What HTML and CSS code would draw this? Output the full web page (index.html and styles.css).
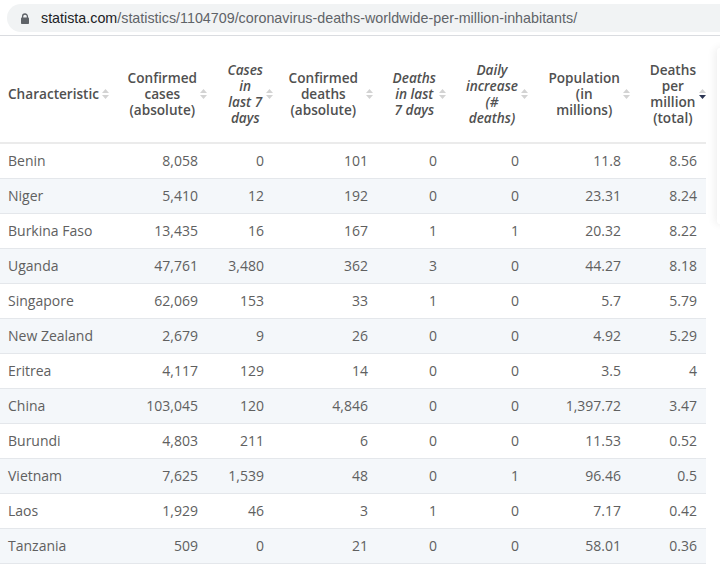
FILE: index.html
```html
<!DOCTYPE html>
<html lang="en">
<head>
<meta charset="utf-8">
<title>Coronavirus deaths per million inhabitants</title>
<link rel="stylesheet" href="styles.css">
</head>
<body>
<header class="topbar">
  <div class="omnibox">
    <svg class="lock" width="8" height="11" viewBox="0 0 8 11"><path d="M1.6 5V3.4a2.4 2.4 0 0 1 4.8 0V5" fill="none" stroke="#5f6368" stroke-width="1.3"/><rect x="0" y="4.6" width="8" height="6.4" rx="0.8" fill="#5f6368"/></svg>
    <span class="host">statista.com</span><span class="path">/statistics/1104709/coronavirus-deaths-worldwide-per-million-inhabitants/</span>
  </div>
</header>
<main class="content">
  <table class="data">
    <colgroup>
      <col class="w1"><col class="w2"><col class="w3"><col class="w4"><col class="w5"><col class="w6"><col class="w7"><col class="w8">
    </colgroup>
    <thead>
      <tr>
        <th class="first"><div class="hd start"><span class="lbl">Characteristic</span><svg class="sort" width="7" height="12" viewBox="0 0 7 12"><path d="M0 5L3.5 1L7 5Z" fill="#d3d3d3"/><path d="M0 7H7L3.5 11Z" fill="#d3d3d3"/></svg></div></th>
        <th><div class="hd"><span class="lbl">Confirmed<br>cases<br>(absolute)</span><svg class="sort" width="7" height="12" viewBox="0 0 7 12"><path d="M0 5L3.5 1L7 5Z" fill="#d3d3d3"/><path d="M0 7H7L3.5 11Z" fill="#d3d3d3"/></svg></div></th>
        <th><div class="hd"><span class="lbl it">Cases<br>in<br>last 7<br>days</span><svg class="sort" width="7" height="12" viewBox="0 0 7 12"><path d="M0 5L3.5 1L7 5Z" fill="#d3d3d3"/><path d="M0 7H7L3.5 11Z" fill="#d3d3d3"/></svg></div></th>
        <th><div class="hd wide"><span class="lbl">Confirmed<br>deaths<br>(absolute)</span><svg class="sort" width="7" height="12" viewBox="0 0 7 12"><path d="M0 5L3.5 1L7 5Z" fill="#d3d3d3"/><path d="M0 7H7L3.5 11Z" fill="#d3d3d3"/></svg></div></th>
        <th><div class="hd"><span class="lbl it">Deaths<br>in last<br>7 days</span><svg class="sort" width="7" height="12" viewBox="0 0 7 12"><path d="M0 5L3.5 1L7 5Z" fill="#d3d3d3"/><path d="M0 7H7L3.5 11Z" fill="#d3d3d3"/></svg></div></th>
        <th><div class="hd"><span class="lbl it">Daily<br>increase<br>(#<br>deaths)</span><svg class="sort" width="7" height="12" viewBox="0 0 7 12"><path d="M0 5L3.5 1L7 5Z" fill="#d3d3d3"/><path d="M0 7H7L3.5 11Z" fill="#d3d3d3"/></svg></div></th>
        <th><div class="hd"><span class="lbl">Population<br>(in<br>millions)</span><svg class="sort" width="7" height="12" viewBox="0 0 7 12"><path d="M0 5L3.5 1L7 5Z" fill="#d3d3d3"/><path d="M0 7H7L3.5 11Z" fill="#d3d3d3"/></svg></div></th>
        <th><div class="hd"><span class="lbl">Deaths<br>per<br>million<br>(total)</span><svg class="sort" width="7" height="12" viewBox="0 0 7 12"><path d="M0 5L3.5 1L7 5Z" fill="#d3d3d3"/><path d="M0 7H7L3.5 11Z" fill="#2c3553"/></svg></div></th>
      </tr>
    </thead>
    <tbody>
      <tr><td>Benin</td><td>8,058</td><td>0</td><td>101</td><td>0</td><td>0</td><td>11.8</td><td>8.56</td></tr>
      <tr><td>Niger</td><td>5,410</td><td>12</td><td>192</td><td>0</td><td>0</td><td>23.31</td><td>8.24</td></tr>
      <tr><td>Burkina Faso</td><td>13,435</td><td>16</td><td>167</td><td>1</td><td>1</td><td>20.32</td><td>8.22</td></tr>
      <tr><td>Uganda</td><td>47,761</td><td>3,480</td><td>362</td><td>3</td><td>0</td><td>44.27</td><td>8.18</td></tr>
      <tr><td>Singapore</td><td>62,069</td><td>153</td><td>33</td><td>1</td><td>0</td><td>5.7</td><td>5.79</td></tr>
      <tr><td>New Zealand</td><td>2,679</td><td>9</td><td>26</td><td>0</td><td>0</td><td>4.92</td><td>5.29</td></tr>
      <tr><td>Eritrea</td><td>4,117</td><td>129</td><td>14</td><td>0</td><td>0</td><td>3.5</td><td>4</td></tr>
      <tr><td>China</td><td>103,045</td><td>120</td><td>4,846</td><td>0</td><td>0</td><td>1,397.72</td><td>3.47</td></tr>
      <tr><td>Burundi</td><td>4,803</td><td>211</td><td>6</td><td>0</td><td>0</td><td>11.53</td><td>0.52</td></tr>
      <tr><td>Vietnam</td><td>7,625</td><td>1,539</td><td>48</td><td>0</td><td>1</td><td>96.46</td><td>0.5</td></tr>
      <tr><td>Laos</td><td>1,929</td><td>46</td><td>3</td><td>1</td><td>0</td><td>7.17</td><td>0.42</td></tr>
      <tr><td>Tanzania</td><td>509</td><td>0</td><td>21</td><td>0</td><td>0</td><td>58.01</td><td>0.36</td></tr>
    </tbody>
  </table>
  <div class="sidecard"></div>
</main>
</body>
</html>
```

FILE: styles.css
```css
html, body {
  margin: 0;
  padding: 0;
  background: #fff;
}
body {
  width: 720px;
  height: 575px;
  overflow: hidden;
  font-family: "Open Sans", "Noto Sans", sans-serif;
}
.topbar {
  height: 36px;
  border-bottom: 1px solid #dadce0;
  padding: 4px 0 0 7px;
  box-sizing: border-box;
}
.omnibox {
  height: 28px;
  border-radius: 14px 0 0 14px;
  background: #f1f3f4;
  display: flex;
  align-items: center;
  padding-left: 14px;
  font-family: "Liberation Sans", Arial, sans-serif;
  font-size: 14.3px;
  white-space: nowrap;
}
.lock {
  display: block;
  margin-right: 12px;
  margin-top: 1px;
}
.host { color: #202124; }
.path { color: #5f6368; }

.content {
  position: relative;
  padding-top: 10px;
}
.data {
  width: 706px;
  table-layout: fixed;
  border-collapse: separate;
  border-spacing: 0;
}
.w1 { width: 110px; }
.w2 { width: 97px; }
.w3 { width: 66px; }
.w4 { width: 104px; }
.w5 { width: 69px; }
.w6 { width: 82px; }
.w7 { width: 102px; }
.w8 { width: 76px; }

th {
  padding: 16px 0;
  vertical-align: middle;
  border-bottom: 2px solid #ebebeb;
  color: #505050;
  font-size: 13.6px;
  font-weight: 600;
  line-height: 16px;
}
th.first { padding-left: 8px; }
.hd {
  display: flex;
  align-items: center;
  justify-content: flex-end;
}
.hd.start { justify-content: flex-start; }
.lbl {
  display: block;
  text-align: center;
  white-space: nowrap;
}
.lbl.it { font-style: italic; }
.sort {
  display: block;
  flex: none;
  margin-left: 3px;
}
.hd.wide .lbl { margin-right: 5px; }
.hd.wide .sort { margin-right: 4px; }

td {
  height: 34px;
  padding: 0 9px 0 0;
  border-bottom: 1px solid #e4e7eb;
  text-align: right;
  color: #606060;
  font-size: 14px;
  line-height: 20px;
  white-space: nowrap;
}
td:first-child {
  text-align: left;
  padding-left: 8px;
}
tbody tr:nth-child(even) td { background: #f4f7fa; }

.sidecard {
  position: absolute;
  left: 717px;
  top: 12px;
  width: 20px;
  height: 176px;
  background: #fff;
  border-radius: 3px;
  box-shadow: -2px 0 8px rgba(0, 0, 0, 0.07);
}
```
